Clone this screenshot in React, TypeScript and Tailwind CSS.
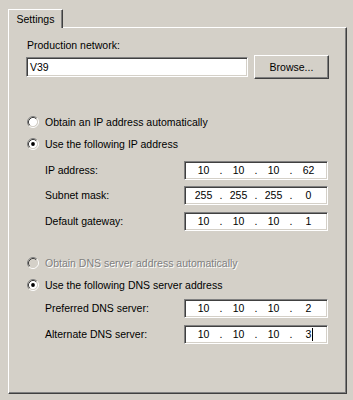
import React from "react";

const sunken =
  "border border-t-[#808080] border-l-[#808080] border-b-white border-r-white shadow-[inset_1px_1px_0_#404040,inset_-1px_-1px_0_#d4d0c8] bg-white";

function Radio({ checked, disabled }: { checked?: boolean; disabled?: boolean }) {
  return (
    <svg width="12" height="12" viewBox="0 0 12 12" className="shrink-0 block">
      <circle cx="6" cy="6" r="4.2" fill={disabled ? "#d4d0c8" : "#ffffff"} />
      <path d="M 2.11 9.89 A 5.5 5.5 0 0 1 9.89 2.11" stroke="#808080" strokeWidth="1" fill="none" />
      <path d="M 9.89 2.11 A 5.5 5.5 0 0 1 2.11 9.89" stroke="#ffffff" strokeWidth="1" fill="none" />
      <path d="M 2.82 9.18 A 4.5 4.5 0 0 1 9.18 2.82" stroke="#404040" strokeWidth="1" fill="none" />
      <path d="M 9.18 2.82 A 4.5 4.5 0 0 1 2.82 9.18" stroke="#d4d0c8" strokeWidth="1" fill="none" />
      {checked && <circle cx="6" cy="6" r="1.9" fill="#000000" />}
    </svg>
  );
}

function RadioRow({
  label,
  checked,
  disabled,
  className,
}: {
  label: string;
  checked?: boolean;
  disabled?: boolean;
  className?: string;
}) {
  return (
    <div className={"flex items-center h-[22px] pl-[1px] gap-[6px] " + (className ?? "")}>
      <Radio checked={checked} disabled={disabled} />
      <span
        className={
          disabled
            ? "text-[#808080] [text-shadow:1px_1px_0_#ffffff] leading-[13px]"
            : "text-black leading-[13px]"
        }
      >
        {label}
      </span>
    </div>
  );
}

function IpField({ parts, caret }: { parts: string[]; caret?: boolean }) {
  return (
    <div className={sunken + " w-[144px] h-[19px] pl-[3px] grid grid-cols-[31px_4px_31px_4px_31px_4px_31px] items-center leading-[13px]"}>
      <span className="text-center">{parts[0]}</span>
      <span className="text-center">.</span>
      <span className="text-center">{parts[1]}</span>
      <span className="text-center">.</span>
      <span className="text-center">{parts[2]}</span>
      <span className="text-center">.</span>
      <span className="text-center">
        {parts[3]}
        {caret && <span className="inline-block w-px h-[13px] bg-black align-middle ml-[1px] -mr-[2px]" />}
      </span>
    </div>
  );
}

function FieldRow({ label, parts, caret, className }: { label: string; parts: string[]; caret?: boolean; className?: string }) {
  return (
    <div className={"flex items-center h-[19px] " + (className ?? "")}>
      <span className="ml-[19px] w-[139px] leading-[13px]">{label}</span>
      <IpField parts={parts} caret={caret} />
    </div>
  );
}

export default function App() {
  return (
    <div
      className="w-[353px] h-[400px] bg-[#d4d0c8] pt-[9px] pl-[8px] text-black text-[10.5px]"
      style={{ fontFamily: '"Liberation Sans", Arial, sans-serif' }}
    >
      <div className="relative z-10 w-[55px] h-[19px] bg-[#d4d0c8] border-l border-t border-r border-l-white border-t-white border-r-[#404040] shadow-[inset_-1px_0_0_#808080] rounded-tr-[1px] flex items-center justify-center leading-[13px]">
        Settings
      </div>
      <div className="-mt-[1px] w-[339px] h-[367px] border border-t-white border-l-white border-b-[#404040] border-r-[#404040] shadow-[inset_-1px_-1px_0_#808080] pl-[17px] pt-[11px] flex flex-col">
        <div className="ml-[1px] leading-[13px] h-[13px]">Production network:</div>
        <div className="mt-[3px] flex items-center h-[24px]">
          <div className={sunken + " w-[222px] h-[20px] flex items-center pl-[3px] leading-[13px]"}>V39</div>
          <div className="ml-[6px] w-[75px] h-[24px] border border-t-white border-l-white border-b-[#404040] border-r-[#404040] shadow-[inset_-1px_-1px_0_#808080] flex items-center justify-center leading-[13px]">
            Browse...
          </div>
        </div>

        <RadioRow className="mt-[32px]" label="Obtain an IP address automatically" />
        <RadioRow label="Use the following IP address" checked />

        <FieldRow className="mt-[6px]" label="IP address:" parts={["10", "10", "10", "62"]} />
        <FieldRow className="mt-[6px]" label="Subnet mask:" parts={["255", "255", "255", "0"]} />
        <FieldRow className="mt-[7px]" label="Default gateway:" parts={["10", "10", "10", "1"]} />

        <RadioRow className="mt-[21px]" label="Obtain DNS server address automatically" disabled />
        <RadioRow label="Use the following DNS server address" checked />

        <FieldRow className="mt-[3px]" label="Preferred DNS server:" parts={["10", "10", "10", "2"]} />
        <FieldRow className="mt-[7px]" label="Alternate DNS server:" parts={["10", "10", "10", "3"]} caret />
      </div>
    </div>
  );
}
